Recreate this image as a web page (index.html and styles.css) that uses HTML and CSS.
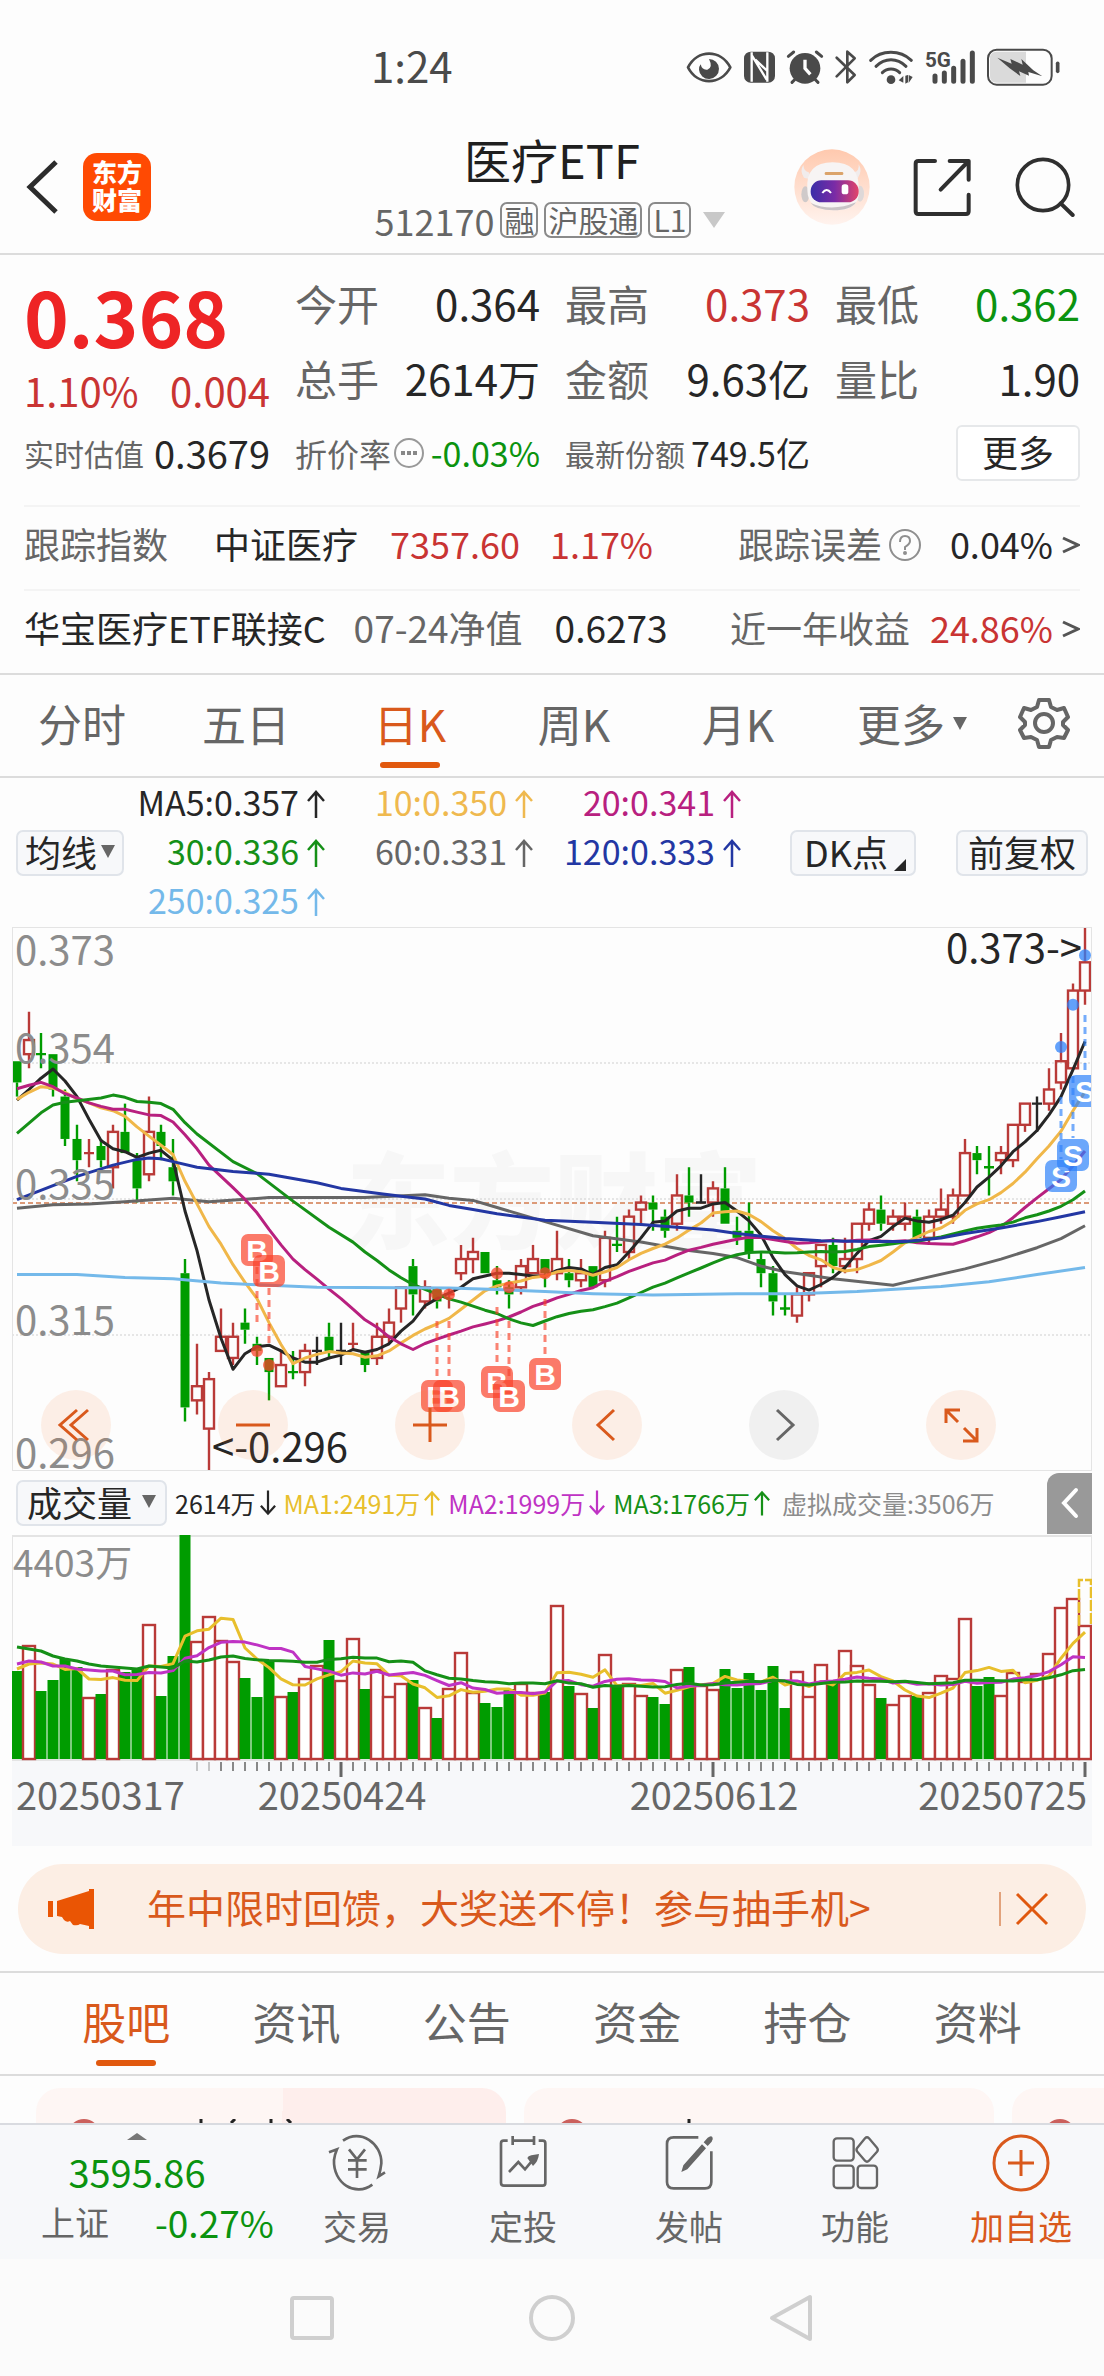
FILE: index.html
```html
<!DOCTYPE html>
<html lang="zh-CN">
<head>
<meta charset="utf-8">
<meta name="viewport" content="width=device-width, initial-scale=1">
<title>医疗ETF 512170</title>
<link rel="stylesheet" href="styles.css">
</head>
<body>
<svg class="defs" aria-hidden="true">
  <symbol id="up" viewBox="0 0 18 30"><path d="M9 29V3M1 12L9 3l8 9" fill="none" stroke="currentColor" stroke-width="2.5"/></symbol>
  <symbol id="down" viewBox="0 0 18 30"><path d="M9 1v26M1 18l8 9 8-9" fill="none" stroke="currentColor" stroke-width="2.5"/></symbol>
  <linearGradient id="halo" x1="0" y1="0" x2="0" y2="1"><stop offset="0" stop-color="#ffc9ae"/><stop offset="1" stop-color="#fff3ee"/></linearGradient>
  <linearGradient id="visor"><stop offset="0" stop-color="#3a2fa8"/><stop offset=".5" stop-color="#7a2ba6"/><stop offset="1" stop-color="#e2456a"/></linearGradient>
</svg>

<div class="status">
  <time class="clock">1:24</time>
  <svg class="status-icons" viewBox="15 22 1131 120" role="img" aria-label="系统状态">
    <g fill="none" stroke="#4a4a4a" stroke-linecap="round" stroke-linejoin="round">
      <path d="M24 83C52 28 122 28 151 83C122 138 52 138 24 83Z" stroke-width="8"/>
      <path d="M325 50l16-13M425 50l-16-13M346 118l-10 10M404 118l10 10" stroke-width="9"/>
      <path d="M470 54l54 52-22 22V36l22 20-54 54" stroke-width="8"/>
      <path d="M572 62C605 30 660 30 694 62M588 80C615 54 651 54 678 80M607 99C622 84 644 84 659 99" stroke-width="9"/>
      <path d="M765 109v16M793 100v25M821 86v39M849 65v60M877 40v85" stroke-width="15"/>
      <rect x="924" y="30" width="191" height="105" rx="26" stroke-width="6"/>
      <path d="M1133 71v24" stroke-width="11"/>
    </g>
    <path d="M930 56q0-20 20-20h88v93h-88q-20 0-20-20z" fill="#dadada"/>
    <g fill="#4a4a4a">
      <path d="M87 58a30 30 0 1 1-30 32q0-10 5-16q4 18 20 16q18-6 5-32z"/>
      <rect x="192" y="36" width="93" height="93" rx="20"/>
      <circle cx="375" cy="86" r="46"/><circle cx="633" cy="120" r="13"/>
      <path d="M656 122l14-13v20zM676 108v24l8-4v-22zM698 112l-12-6v24z"/>
      <path d="M952 54l43 18-4-14 37 17-4-17 36 34 27 18-42-13 2 11-30-13 4 14-32-23z"/>
    </g>
    <path d="M215 38v88M262 38v88M216 48l44 72M226 60l36 34" fill="none" stroke="#fff" stroke-width="7"/>
    <path d="M375 60v26l16 18" fill="none" stroke="#fff" stroke-width="10"/>
    <text class="net" x="735" y="82">5G</text>
  </svg>
</div>

<header class="header">
  <div class="header-left">
    <button class="icon-btn" aria-label="返回"><svg width="36" height="56" viewBox="0 0 36 56"><path d="M31 3L5 28l26 25" fill="none" stroke="#2c2c2c" stroke-width="5"/></svg></button>
    <a class="logo" href="#home">东方<br>财富</a>
  </div>
  <div class="header-title">
    <h1>医疗ETF</h1>
    <div class="code"><span>512170</span><span class="tag">融</span><span class="tag">沪股通</span><span class="tag">L1</span><i class="tri tri-title"></i></div>
  </div>
  <div class="header-right">
    <button class="icon-btn" aria-label="智能助手"><svg width="76" height="76" viewBox="344 328 228 228">
      <circle cx="458" cy="442" r="113" fill="url(#halo)"/>
      <path d="M372 376q2 20 16 22l10 22-24-6q-14-20-2-38zM538 374q2 22-14 24l-8 20 20-4q14-20 2-40z" fill="#f1ecec"/>
      <ellipse cx="378" cy="464" rx="12" ry="24" fill="#cfcaca"/><ellipse cx="542" cy="462" rx="12" ry="24" fill="#ded8d8"/>
      <path d="M384 450q-6-82 76-82t78 82q6 62-74 62t-80-62z" fill="#f7f4f4"/>
      <path d="M394 490q64 28 136-2-16 24-68 24t-68-22z" fill="#c9c3c6"/>
      <rect x="436" y="397" width="56" height="9" rx="4" fill="#dba36a"/>
      <rect x="394" y="422" width="144" height="66" rx="32" fill="url(#visor)"/>
      <path d="M429 460q13-18 26 0" fill="none" stroke="#fff" stroke-width="6"/><rect x="487" y="434" width="20" height="30" rx="8" fill="#fff"/>
    </svg></button>
    <button class="icon-btn" aria-label="分享"><svg width="59" height="58" viewBox="694 354 177 174"><path d="M760 363h-50q-8 0-8 8v143q0 8 8 8h143q8 0 8-8v-50M804 363h57v56M861 363l-84 86" fill="none" stroke="#2f2f2f" stroke-width="12" stroke-linecap="round" stroke-linejoin="round"/></svg></button>
    <button class="icon-btn" aria-label="搜索"><svg width="60" height="60" viewBox="1004 349 180 180"><path d="M1141 488l36 35" stroke="#2f2f2f" stroke-width="12" stroke-linecap="round"/><circle cx="1088" cy="433" r="77" fill="none" stroke="#2f2f2f" stroke-width="11"/></svg></button>
  </div>
</header>

<section class="quote" aria-label="行情">
  <div class="price red"><strong>0.368</strong><div class="change"><span>1.10%</span><span>0.004</span></div></div>
  <div class="kv"><span>今开</span><b>0.364</b></div>
  <div class="kv"><span>最高</span><b class="red">0.373</b></div>
  <div class="kv"><span>最低</span><b class="green">0.362</b></div>
  <div class="kv"><span>总手</span><b>2614万</b></div>
  <div class="kv"><span>金额</span><b>9.63亿</b></div>
  <div class="kv"><span>量比</span><b>1.90</b></div>
  <div class="kv small"><span>实时估值</span><b class="mid">0.3679</b></div>
  <div class="kv small"><span class="rate">折价率<svg width="30" height="30" viewBox="0 0 30 30"><circle cx="15" cy="15" r="14" fill="none" stroke="#999" stroke-width="2"/><path d="M7 15h4m2 0h4m2 0h4" stroke="#888" stroke-width="4"/></svg></span><b class="green">-0.03%</b></div>
  <div class="kv small"><span>最新份额</span><b>749.5亿</b></div>
  <div class="more-cell"><button class="more">更多</button></div>
</section>
<a class="linkrow" href="#index">
  <span class="gray">跟踪指数</span><span class="idx-name">中证医疗</span><span class="red idx-val">7357.60</span><span class="red idx-pct">1.17%</span>
  <span class="gray push">跟踪误差</span><svg class="help" width="34" height="34" viewBox="0 0 34 34"><circle cx="17" cy="17" r="15" fill="none" stroke="#8f8f8f" stroke-width="2"/><path d="M12 14q0-6 5-6t5 5q0 3-5 6v3" fill="none" stroke="#8f8f8f" stroke-width="2"/><circle cx="17" cy="25" r="2" fill="#8f8f8f"/></svg><span class="end-val">0.04%</span><svg class="chev" width="18" height="22" viewBox="0 0 18 22"><path d="M1 4l15 7-15 7" fill="none" stroke="#555" stroke-width="3"/></svg>
</a>
<a class="linkrow last" href="#linked">
  <span>华宝医疗ETF联接C</span><span class="gray nav-date">07-24净值</span><span class="nav-val">0.6273</span>
  <span class="gray push">近一年收益</span><span class="end-val red">24.86%</span><svg class="chev" width="18" height="22" viewBox="0 0 18 22"><path d="M1 4l15 7-15 7" fill="none" stroke="#555" stroke-width="3"/></svg>
</a>

<nav class="tabs periods" aria-label="周期">
  <button>分时</button><button>五日</button><button class="on">日K</button><button>周K</button><button>月K</button><button class="more-periods">更多<i class="tri tri-s"></i></button>
  <button aria-label="设置"><svg width="52" height="52" viewBox="0 0 52 52" fill="none" stroke="#666" stroke-width="4"><path d="M21 3h10l2 7 6 3 7-2 4 9-5 5v3l5 5-4 8-7-1-6 3-2 7H21l-2-7-6-3-7 1-4-8 5-5v-3l-5-5 4-9 7 2 6-3z" stroke-linejoin="round"/><circle cx="26" cy="26" r="9"/></svg></button>
</nav>

<section class="ma" aria-label="均线">
  <button class="chip">均线<i class="tri tri-s"></i></button>
  <div class="ma-grid">
    <span class="c5">MA5:0.357<svg><use href="#up"/></svg></span><span class="c10">10:0.350<svg><use href="#up"/></svg></span><span class="c20">20:0.341<svg><use href="#up"/></svg></span>
    <span class="c30">30:0.336<svg><use href="#up"/></svg></span><span class="c60">60:0.331<svg><use href="#up"/></svg></span><span class="c120">120:0.333<svg><use href="#up"/></svg></span>
    <span class="c250">250:0.325<svg><use href="#up"/></svg></span>
  </div>
  <button class="chip dk">DK点<i class="corner"></i></button>
  <button class="chip adj">前复权</button>
</section>

<div class="charts">
  <div class="kchart">
    <svg viewBox="0 0 1080 544" role="img" aria-label="日K线图">
      <text class="watermark" x="334" y="314">东方财富</text>
      <g class="grid"><path d="M0 136H1080M0 272H1080M0 408H1080"/></g>
      <path d="M0 276H1080" class="ref-line"/>
      <g id="candles"></g>
      <g id="averages"></g>
      <g id="signals"></g>
      <g class="axis"><text x="3" y="38">0.373</text><text x="3" y="136">0.354</text><text x="3" y="272">0.335</text><text x="3" y="408">0.315</text><text x="3" y="541">0.296</text></g>
      <g class="callout"><text x="200" y="535">&lt;-0.296</text><text x="1070" y="36" text-anchor="end">0.373-&gt;</text></g>
      <rect x="0" y="0" width="1080" height="544" class="frame"/>
    </svg>
    <div class="chart-tools">
      <button aria-label="最左"><svg viewBox="0 0 70 70"><path d="M36 20L19 35l17 15M47 20L30 35l17 15"/></svg></button>
      <button aria-label="缩小"><svg viewBox="0 0 70 70"><path d="M18 35h34"/></svg></button>
      <button aria-label="放大"><svg viewBox="0 0 70 70"><path d="M18 35h34M35 18v34"/></svg></button>
      <button aria-label="向左"><svg viewBox="0 0 70 70"><path d="M42 20L26 35l16 15"/></svg></button>
      <button class="off" aria-label="向右"><svg viewBox="0 0 70 70"><path d="M28 20l16 15-16 15"/></svg></button>
      <button aria-label="全屏"><svg viewBox="0 0 70 70"><path d="M20 33V20h14M20 20l12 12M51 38v13H37M51 51L38 38"/></svg></button>
    </div>
  </div>
  <div class="volbar">
    <button class="chip vol-chip">成交量<i class="tri tri-s"></i></button>
    <span>2614万<svg><use href="#down"/></svg></span><span class="v1">MA1:2491万<svg><use href="#up"/></svg></span><span class="v2">MA2:1999万<svg><use href="#down"/></svg></span><span class="v3">MA3:1766万<svg><use href="#up"/></svg></span><span class="virtual">虚拟成交量:3506万</span>
    <button class="collapse" aria-label="展开"><svg width="20" height="32" viewBox="0 0 20 32"><path d="M16 3L4 16l12 13" fill="none" stroke="#fff" stroke-width="4" stroke-linecap="round"/></svg></button>
  </div>
  <svg class="vchart" viewBox="0 0 1080 311" role="img" aria-label="成交量图">
    <rect x="0" y="225" width="1080" height="86" fill="#f7f8fa"/>
    <rect x="0" y="1" width="1080" height="224" class="frame"/>
    <text class="axis" x="1" y="42">4403万</text>
    <g id="volumes"></g>
    <g id="volume-averages"></g>
    <g id="ticks"></g>
    <g class="dates"><text x="4" y="275">20250317</text><text x="330" y="275" text-anchor="middle">20250424</text><text x="702" y="275" text-anchor="middle">20250612</text><text x="1075" y="275" text-anchor="end">20250725</text></g>
  </svg>
</div>

<aside class="banner">
  <svg width="46" height="40" viewBox="0 0 46 40" fill="#ea5504"><path d="M0 12h5v16H0zM9 12L41 2V0h5v40h-5v-3l-9-2q-2 2-7 1l-3-4q-3 2-6-1l-2-3-5-1z"/></svg>
  <a href="#promo">年中限时回馈，大奖送不停！参与抽手机&gt;</a>
  <button class="icon-btn close" aria-label="关闭"><svg width="34" height="34" viewBox="0 0 34 34"><path d="M2 2l30 30M32 2L2 32" stroke="#e0580f" stroke-width="3"/></svg></button>
</aside>

<nav class="tabs sections" aria-label="内容">
  <button class="on">股吧</button><button>资讯</button><button>公告</button><button>资金</button><button>持仓</button><button>资料</button>
</nav>
<div class="cards">
  <div class="card first"><i class="dot"></i><svg width="100" height="4" viewBox="0 0 100 4"><path d="M4 0v4M34 4l4-4M74 0v4M90 0l4 4" stroke="#222" stroke-width="3"/></svg></div>
  <div class="card"><i class="dot"></i><svg width="100" height="4" viewBox="0 0 100 4"><path d="M4 0v4" stroke="#222" stroke-width="3"/></svg></div>
  <div class="card"><i class="dot"></i></div>
</div>

<nav class="dock" aria-label="工具栏">
  <a class="index" href="#sh"><i class="tri tri-up"></i><span class="green index-val">3595.86</span><span class="index-row"><span>上证</span><span class="green">-0.27%</span></span></a>
  <a href="#trade"><svg viewBox="60 156 180 186"><g fill="none" stroke="#666" stroke-width="8"><path d="M108 182C160 145 225 190 223 250q-2 20-8 39l19-12M196 314C145 352 78 310 81 240q2-16 9-32l-24 9"/><path d="M126 208l24 30 24-30M123 241h56M123 268h56M150 240v54"/></g></svg>交易</a>
  <a href="#plan"><svg viewBox="492 156 180 186"><g fill="none" stroke="#666" stroke-width="8"><path d="M536 182h-12q-8 0-8 8v118q0 9 9 9h116q8 0 8-8V190q0-8-8-8h-12M551 168v27M615 168v27M551 182h64M540 276l28-30 20 22 30-36"/></g><path d="M595 234q2-6 12-8l23-4q-2 22-18 36z" fill="#666"/></svg>定投</a>
  <a href="#post"><svg viewBox="926 156 180 186"><path d="M1044 172h-74q-20 0-20 20v114q0 19 20 19h94q19 0 19-19v-92" fill="none" stroke="#666" stroke-width="8"/><path d="M993 276l6-20 56-63 12 12-56 63zM1060 187l12-14q10-8 14-2t-2 14l-12 13z" fill="#666"/></svg>发帖</a>
  <a href="#more"><svg viewBox="1360 156 180 186"><g fill="none" stroke="#666" stroke-width="7"><rect x="1386" y="175" width="60" height="67" rx="10"/><rect x="1386" y="257" width="60" height="67" rx="10"/><rect x="1458" y="257" width="58" height="67" rx="10"/><path d="M1480 175q6-6 12 0l24 28q5 6 0 12l-24 27q-6 6-12 0l-23-27q-5-6 0-12z"/></g></svg>功能</a>
  <a class="add" href="#add"><svg viewBox="0 0 60 62"><g fill="none" stroke="#d9591c" stroke-width="3"><circle cx="30" cy="31" r="27"/><path d="M17 31h26M30 18v26"/></g></svg>加自选</a>
</nav>
<nav class="sysnav" aria-label="系统导航">
  <button aria-label="最近任务"><svg viewBox="0 0 48 48"><rect x="4" y="4" width="40" height="40" rx="2"/></svg></button>
  <button aria-label="主页"><svg viewBox="0 0 48 48"><circle cx="24" cy="24" r="21"/></svg></button>
  <button aria-label="返回"><svg viewBox="0 0 48 48"><path d="M42 3v42L4 24z"/></svg></button>
</nav>
<script src="chart.js"></script>
</body>
</html>
```
FILE: styles.css
```css
* { box-sizing: border-box; }
body {
  margin: 0;
  background: #fdfdfd;
  color: #262626;
  font-family: "Noto Sans CJK SC", "Noto Sans", sans-serif;
  font-size: 36px;
  line-height: 1;
}
button { margin: 0; padding: 0; border: 0; background: none; color: inherit; font: inherit; cursor: pointer; }
a { color: inherit; text-decoration: none; }
svg { display: block; flex: none; }
i { display: inline-block; flex: none; }
.defs { position: absolute; width: 0; height: 0; }
.red { color: #c93433; }
.green { color: #0b930f; }
.gray { color: #666; }

.tri { border: 7px solid transparent; border-top: 13px solid #666; border-bottom: 0; }
.tri-title { border-width: 16px 11px 0; border-top-color: #c8c8c8; margin-left: 12px; }
.tri-up { border-width: 0 10px 7px; border-bottom: 7px solid #777; }

/* system status bar */
.status { height: 96px; padding: 0 42px 0 371px; display: flex; align-items: center; justify-content: space-between; }
.clock { font-size: 42px; color: #4a4a4a; padding-top: 34px; }
.status-icons { width: 377px; height: 40px; margin-top: 38px; }
.net { font: bold 62px "Roboto", sans-serif; fill: #4a4a4a; }

/* header */
.header { height: 159px; padding: 0 29px 0 25px; border-bottom: 2px solid #dcdcdc; display: grid; grid-template-columns: 1fr auto 1fr; align-items: center; }
.header-left, .header-right { display: flex; align-items: center; padding-top: 24px; }
.header-left { gap: 22px; }
.header-right { justify-content: flex-end; gap: 43px; }
.logo { width: 68px; height: 68px; border-radius: 14px; background: #ff4a03; color: #fff; font-size: 25px; font-weight: 900; line-height: 28px; text-align: center; padding-top: 4px; }
.header-title { text-align: center; padding-top: 30px; }
h1 { margin: 0; font-size: 47px; line-height: 60px; font-weight: 400; color: #1f1f1f; padding-left: 4px; }
.code { display: flex; align-items: center; color: #666; line-height: 62px; }
.tag { border: 2px solid #8a8a8a; border-radius: 7px; height: 36px; line-height: 30px; padding: 0 2px; font-size: 30px; margin-left: 6px; }
.tag:last-of-type { padding: 0 3px; }

/* quote summary */
.quote { display: grid; grid-template-columns: 246px repeat(3, 1fr); grid-auto-rows: 75px; column-gap: 25px; padding: 10px 24px 15px 24px; }
.price { grid-row: span 2; display: flex; flex-direction: column; }
.price strong { font-size: 76px; line-height: 100px; color: #ee2425; }
.change { display: flex; justify-content: space-between; font-size: 40px; line-height: 50px; }
.kv { display: flex; align-items: center; justify-content: space-between; font-size: 42px; white-space: nowrap; }
.kv span { color: #666; }
.kv b, .mid { font-weight: 400; }
.kv.small { font-size: 34px; }
.kv.small span { font-size: 30px; }
.kv.small .rate { font-size: 32px; display: flex; align-items: center; gap: 3px; }
.kv.small .mid { font-size: 38px; }
.more-cell { display: flex; align-items: center; justify-content: flex-end; }
.more { width: 124px; height: 56px; border: 2px solid #e6e8ea; border-radius: 6px; background: #fff; line-height: 46px; padding-bottom: 4px; }
.linkrow { display: flex; align-items: center; height: 84px; margin: 0 24px; border-top: 2px solid #f4f4f4; white-space: nowrap; padding-bottom: 10px; }
.idx-name { margin-left: 46px; }
.idx-val { margin-left: 32px; }
.idx-pct { margin-left: 30px; }
.push { margin-left: auto; }
.help { margin: 4px 0 0 6px; }
.end-val { margin-left: 28px; }
.chev { margin: 4px 0 0 9px; }
.nav-date, .nav-val { font-size: 37px; }
.nav-date { margin-left: 28px; }
.nav-val { margin-left: 32px; }
.last .end-val { margin-left: 20px; }

/* tab strips */
.tabs { display: grid; color: #666; font-size: 44px; border-top: 2px solid #dcdcdc; border-bottom: 2px solid #dcdcdc; }
.tabs button { display: flex; align-items: center; justify-content: center; position: relative; padding-bottom: 5px; }
.tabs .on { color: #d9591c; }
.tabs .on::after { content: ""; position: absolute; bottom: 8px; width: 60px; height: 6px; border-radius: 3px; background: #e1590f; }
.periods { height: 105px; grid-template-columns: repeat(6, 1fr) 120px; }
.periods .tri { margin-left: 8px; }
.tabs .more-periods { padding-left: 20px; }

/* moving averages */
.ma { display: flex; align-items: center; height: 149px; padding: 0 16px; }
.chip { display: flex; align-items: center; justify-content: center; height: 46px; border: 2px solid #e0e4ea; border-radius: 7px; background: #f7f8fa; line-height: 40px; padding-bottom: 3px; white-space: nowrap; }
.ma > .chip:first-child { width: 108px; }
.ma .tri { margin-left: 4px; }
.ma-grid { flex: 1; display: grid; grid-template-columns: 201px 208px 208px; grid-auto-rows: 49px; font-size: 34px; }
.ma-grid span { display: flex; align-items: center; justify-content: flex-end; gap: 8px; padding-bottom: 4px; }
.ma-grid svg { width: 18px; height: 30px; margin-top: 4px; }
.dk { width: 126px; gap: 6px; }
.corner { align-self: flex-end; border-left: 12px solid transparent; border-bottom: 12px solid #262626; margin-right: -4px; }
.adj { width: 132px; margin-left: 40px; }
.c5 { color: #262626; } .c10 { color: #efb94f; } .c20 { color: #b8207f; } .c30 { color: #159017; }
.c60 { color: #666; } .c120 { color: #2337a3; } .c250 { color: #74b9ea; }

/* charts */
.charts { margin: 0 12px; }
.kchart { position: relative; }
.kchart > svg, .vchart { width: 100%; height: auto; }
.frame { fill: none; stroke: #e4e4e4; stroke-width: 2; }
.grid path { stroke: #cfcfcf; stroke-dasharray: 2 2; }
.ref-line { stroke: #dc9a78; stroke-width: 2; stroke-dasharray: 5 3; }
.axis { font-size: 40px; fill: #8c8c8c; }
.vchart .axis { font-size: 37px; }
.callout { font-size: 40px; fill: #262626; }
.dates { font-size: 38px; fill: #666; }
.watermark { font-size: 104px; font-weight: 900; fill: #f7f7f7; }
.line { fill: none; stroke-width: 3; stroke-linejoin: round; }
.mark { font: bold 30px "Liberation Sans", sans-serif; fill: #fff; text-anchor: middle; }
.chart-tools { position: absolute; left: 0; right: 0; bottom: 11px; padding: 0 96px 0 29px; display: flex; justify-content: space-between; }
.chart-tools button { width: 70px; height: 70px; border-radius: 50%; background: rgba(250, 120, 50, .11); }
.chart-tools .off { background: rgba(0, 0, 0, .05); }
.chart-tools path { fill: none; stroke: #d9591c; stroke-width: 3; }
.chart-tools .off path { stroke: #666; }
.volbar { height: 64px; display: flex; align-items: center; font-size: 25px; white-space: nowrap; gap: 8px; padding-left: 4px; }
.volbar span { display: flex; align-items: center; gap: 4px; }
.volbar span svg { width: 16px; height: 30px; }
.vol-chip { width: 151px; font-size: 35px; gap: 10px; }
.volbar .virtual { color: #8c8c8c; margin-left: 4px; }
.v1 { color: #e8bf2c; } .v2 { color: #bf33c4; } .v3 { color: #159017; }
.collapse { margin-left: auto; width: 45px; height: 61px; border-radius: 12px 0 0 0; background: #999; display: flex; align-items: center; justify-content: center; }

/* promo */
.banner { margin: 18px 18px 17px; height: 90px; padding: 0 30px; border-radius: 45px; background: #fceee4; color: #d9591c; display: flex; align-items: center; font-size: 39px; }
.banner a { margin-left: 53px; padding-bottom: 5px; }
.close { margin-left: auto; margin-right: 7px; border-left: 2px solid #e2a27c; padding-left: 14px; }

.sections { height: 105px; grid-template-columns: repeat(6, 1fr); padding: 0 41px; }
.cards { display: flex; gap: 18px; height: 47px; padding: 12px 0 0 36px; overflow: hidden; }
.card { flex: none; width: 470px; height: 160px; border-radius: 24px; background: #fef6f4; display: flex; padding: 31px 0 0 32px; gap: 97px; }
.card.first { background: linear-gradient(92deg, #fef6f4 52%, #feeeec 52%); }
.dot { width: 32px; height: 32px; border-radius: 50%; background: #cb605c; }

/* bottom bars */
.dock { display: grid; grid-template-columns: 274px repeat(5, 1fr); height: 136px; background: #f7f8fa; border-top: 2px solid #d9dbe0; color: #666; font-size: 34px; }
.dock a { display: flex; flex-direction: column; align-items: center; padding-top: 7px; line-height: 64px; }
.dock a svg { width: 60px; height: 62px; }
.dock .add { color: #d9591c; }
.dock .index { padding: 8px 0 0; }
.index-val { font-size: 38px; line-height: 64px; }
.index-row { display: flex; gap: 46px; line-height: 36px; padding-left: 41px; align-self: flex-start; }
.index-row .green { font-size: 37px; }
.sysnav { height: 117px; background: #fbfbfb; display: flex; justify-content: center; align-items: center; gap: 192px; }
.sysnav svg { width: 48px; height: 48px; fill: none; stroke: #cfcfcf; stroke-width: 4; stroke-linejoin: round; }
```
FILE: chart.js
```js
// Each row: kind (g fall, r rise, k flat), body top, body bottom, high, low, volume.
// Prices are in thousandths, volumes in chart units.
const days = `
g 354 351 354 349 88|r 357 355 361 353 113|g 355 355 358 353 68|g 355 350 355 349 79|g 349 343 350 342 100
g 343 340 345 337 92|r 341 341 343 339 61|g 342 340 343 339 65|r 344 339 345 336 89|g 344 341 348 341 87
g 340 336 341 334 90|r 344 338 349 337 134|g 344 342 345 340 63|g 339 337 343 335 103|g 324 305 326 303 224
r 308 306 314 304 117|r 309 302 310 296 142|r 315 313 319 313 118|r 315 312 317 311 97|g 317 316 319 314 81
g 314 313 315 311 62|g 312 310 312 306 99|r 311 308 313 308 62|g 310 310 313 309 67|r 313 310 314 308 80
k 313 313 315 311 93|g 315 313 317 312 119|k 313 313 317 311 78|r 314 314 317 313 120|g 313 311 313 310 70
r 315 312 317 311 89|r 317 315 319 314 62|r 322 319 322 317 75|g 325 321 326 318 79|r 322 320 323 319 51
g 322 320 322 319 41|r 321 321 322 319 70|r 326 324 328 323 106|r 327 326 329 324 66|g 327 324 327 324 56
g 323 322 325 321 52|g 322 321 323 319 70|r 325 322 326 321 75|r 326 324 328 324 66|g 326 324 326 322 67
r 326 324 330 323 153|g 324 323 326 322 73|r 324 323 326 322 65|g 325 322 325 322 51|r 329 323 330 322 104
g 328 328 332 327 74|r 332 327 333 326 75|r 334 333 335 331 63|g 334 333 335 330 62|g 332 330 333 329 55
r 335 331 338 330 89|g 335 334 339 332 92|k 334 334 338 334 73|r 336 334 337 332 69|g 336 331 339 331 90
g 330 329 332 328 71|g 330 327 334 326 86|g 326 324 327 322 69|g 324 320 325 318 93|g 319 319 321 318 51
r 321 318 322 317 87|r 324 321 324 320 62|r 328 325 328 322 94|g 328 325 329 324 76|r 326 325 329 324 108
r 331 326 331 324 93|r 333 331 334 330 74|g 333 331 335 330 61|r 332 331 333 330 54|r 332 331 334 330 63
g 332 329 333 329 63|r 332 329 333 328 66|r 333 332 336 331 83|r 335 332 336 331 80|r 341 335 343 335 140
g 341 340 342 338 73|g 339 339 342 335 82|r 341 340 342 338 63|r 345 340 345 339 86|r 348 345 348 344 77
k 348 348 349 344 85|r 350 348 353 347 105|r 354 351 358 350 151|r 364 353 365 353 160|r 368 364 373 362 133`
  .trim().split(/[|\n]/).map(row => {
    const [kind, ...n] = row.split(' ');
    const [top, bottom, high, low, volume] = n.map(Number);
    return { kind, top, bottom, high, low, volume, close: kind === 'g' ? bottom : top };
  });

const color = { g: '#009c00', r: '#b93a38', k: '#262626' };
const x = i => 5 + 12 * i;
const y = price => (373 - price) * 544 / 77;

function add(id, tag, attributes, text) {
  const node = document.createElementNS('http://www.w3.org/2000/svg', tag);
  for (const name in attributes) node.setAttribute(name, attributes[name]);
  if (text) node.textContent = text;
  document.getElementById(id).appendChild(node);
}
const line = (id, stroke, points) =>
  add(id, 'polyline', { class: 'line', stroke, points: points.map(p => p.map(v => v.toFixed(1)).join()).join(' ') });

// Average over n days; the first days use known values because their history is off screen.
const average = (values, n, start) => start.concat(
  values.slice(n - 1).map((_, k) => [k + n - 1, values.slice(k, k + n).reduce((a, b) => a + b) / n]));
const fromZero = list => list.map((v, i) => [i, v]);

days.forEach((d, i) => {
  const stroke = color[d.kind], top = y(d.top), h = y(d.bottom) - top;
  const base = { stroke, 'stroke-width': 2.4, fill: 'none' };
  if (h === 0) {
    add('candles', 'path', { ...base, d: `M${x(i)} ${y(d.high)}V${y(d.low)}M${x(i) - 5} ${top}h10` });
  } else {
    add('candles', 'path', { ...base, d: `M${x(i)} ${y(d.high)}V${top}M${x(i)} ${top + h}V${y(d.low)}` });
    if (d.kind === 'g') add('candles', 'rect', { x: x(i) - 4.5, y: top, width: 9, height: h, fill: stroke });
    else add('candles', 'rect', { ...base, x: x(i) - 5, y: top, width: 10, height: h });
  }
  const v = d.volume, bar = { y: 224 - v, height: v };
  if (d.kind === 'g') add('volumes', 'rect', { ...bar, x: x(i) - 5.5, width: 11, fill: stroke });
  else add('volumes', 'rect', { ...bar, x: x(i) - 6, width: 12, fill: '#fff', stroke: color.r, 'stroke-width': 2.4 });
  if (i > 14) {
    const major = [27, 58, 89].includes(i);
    add('ticks', 'path', { d: `M${x(i)} 227v${major ? 15 : 9}`, stroke: major ? '#666' : '#888', 'stroke-width': major ? 3 : 2, opacity: i < 17 ? 0.45 : 1 });
  }
});
// Projected volume of the current day
add('volumes', 'path', { d: 'M1067 91V45h12V91', fill: 'none', stroke: '#e8bf2c', 'stroke-width': 2.5, 'stroke-dasharray': '11 2' });

const closes = days.map(d => d.close), volumes = days.map(d => d.volume);
const prices = [
  ['#666', [[0,333.2],[3,333.7],[6,333.8],[9,334.1],[13,334.6],[16,334.1],[21,334.7],[29,334.7],[34,335.1],[36,334.6],[38,334.3],[40,333.3],[44,331.3],[48,329.3],[52,328.4],[56,327.2],[58,326.8],[60,326.2],[62,325],[64,324.2],[68,323.2],[73,322.3],[74,322.7],[79,324.6],[82,326],[85,327.6],[87,328.9],[89,330.7]]],
  ['#262626', average(closes, 5, fromZero([348.5,350,351.6,352.9]))],
  ['#f0b749', average(closes, 10, fromZero([348.6,349.6,350.4,350.2,349.6,348.7,348.1,347.4,347]))],
  ['#b8207f', average(closes, 20, fromZero([350.1,350.6,351,350.4,349.4,348.8,348.1,347.6,347.2,347.2,346.8,346.4,346.3,345.4,343.6,341.6,339.3,337.7,336.1]))],
  ['#159017', average(closes, 30, [[0,343.8],[2,346.7],[3,347.8],[4,348.2],[7,348.8],[8,349.2],[9,348.9],[10,348.3],[11,348.2],[12,348],[13,347.2],[14,345.3],[15,343.7],[18,339.8],[20,338.1],[23,334.2],[26,330.5],[28,328.4]])],
  ['#2337a3', [[0,334.4],[3,336.4],[5,337.7],[8,339.3],[10,340.1],[11,340.3],[12,340.2],[13,339.8],[15,339],[18,338.4],[21,338],[25,336.8],[27,336],[30,335.3],[32,334.9],[34,334.5],[36,333.6],[38,333],[40,332.4],[44,331.5],[48,331.2],[52,330.9],[55,330.5],[58,330.1],[60,329.6],[64,328.9],[67,328.6],[71,328.5],[74,328.5],[77,329],[79,329.6],[82,330.4],[85,331.3],[87,332],[89,332.7]]],
  ['#74b9ea', [[0,323.8],[5,323.8],[9,323.4],[13,323.2],[17,322.6],[21,322.3],[25,322],[36,321.9],[40,321.7],[44,321.4],[48,321.1],[53,320.9],[60,321.1],[65,321.1],[70,321.4],[77,322.1],[81,322.8],[85,323.8],[89,324.8]]]
];
prices.forEach(([stroke, list]) => line('averages', stroke, list.map(([i, p]) => [x(i), y(p)])));
[
  ['#e8bf2c', average(volumes, 5, fromZero([90,95,96,95]))],
  ['#bf33c4', average(volumes, 10, fromZero([95,98,97,93,93,90,89,88,88]))],
  ['#159017', average(volumes, 20, fromZero([112,110,108,103,100,98,95,93,92,91,90,93,92,91,98,97,99,102,103]))]
].forEach(([stroke, list]) => line('volume-averages', stroke, list.map(([i, v]) => [x(i), 224 - v])));

// Buy and sell marks: letter, day, marked price, top of the label, dashed leader from/to
[
  ['B', 20, 313, 307, 340, 398], ['B', 21, 311, 328, 361, 418],
  ['B', 35, 321, 453, 394, 452], ['B', 36, 321, 453, 394, 452],
  ['B', 40, 324, 439, 380, 438], ['B', 41, 322, 453, 394, 452], ['B', 44, 324, 431, 372, 430],
  ['S', 87, 356, 233, 170, 232], ['S', 88, 362, 212, 149, 211], ['S', 89, 369, 148, 88, 147]
].forEach(([letter, i, price, top, from, to]) => {
  const fill = letter === 'B' ? '#f9422a' : '#2d82fa';
  add('signals', 'path', { d: `M${x(i)} ${from}V${to}`, stroke: fill, 'stroke-width': 3, 'stroke-dasharray': '7 5', opacity: 0.65 });
  add('signals', 'circle', { cx: x(i), cy: y(price), r: 6, fill, opacity: 0.75 });
  add('signals', 'rect', { x: x(i) - 16, y: top, width: 32, height: 32, rx: 7, fill, opacity: 0.7 });
  add('signals', 'text', { class: 'mark', x: x(i), y: top + 27 }, letter);
});
```
